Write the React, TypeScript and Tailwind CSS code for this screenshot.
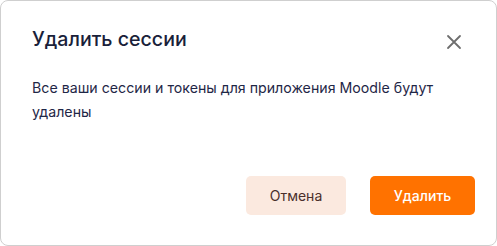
import React from 'react';

const App: React.FC = () => {
    return (
        <div className="w-[497px] h-[246px] bg-white" style={{ fontFamily: 'Inter, "Noto Sans", sans-serif' }}>
            <div className="h-full flex flex-col border border-[#cfcfcf] rounded-[8px] pl-[31px] pr-[21px] pt-[24px] pb-[30px]">
                <div className="flex items-start justify-between">
                    <h2 className="text-[19.6px] leading-[28px] font-medium text-[#1a1f3a]">Удалить сессии</h2>
                    <button className="mt-[9px] mr-[13px] text-[#6e6e6e]">
                        <svg width="16" height="16" viewBox="0 0 16 16" fill="none" stroke="currentColor" strokeWidth="1.8" strokeLinecap="round">
                            <path d="M2 2L14 14M14 2L2 14" />
                        </svg>
                    </button>
                </div>

                <p className="mt-[23px] pr-[30px] text-[14.2px] leading-[24px] text-[#1f2747]">
                    Все ваши сессии и токены для приложения Moodle будут удалены
                </p>

                <div className="mt-auto flex justify-end gap-[24px]">
                    <button className="w-[100px] h-[39px] rounded-[5px] bg-[#fbe9df] text-[14px] text-[#4a2f2b]">
                        Отмена
                    </button>
                    <button className="w-[105px] h-[39px] rounded-[5px] bg-[#ff7200] text-[14px] font-medium text-white">
                        Удалить
                    </button>
                </div>
            </div>
        </div>
    );
};

export default App;
